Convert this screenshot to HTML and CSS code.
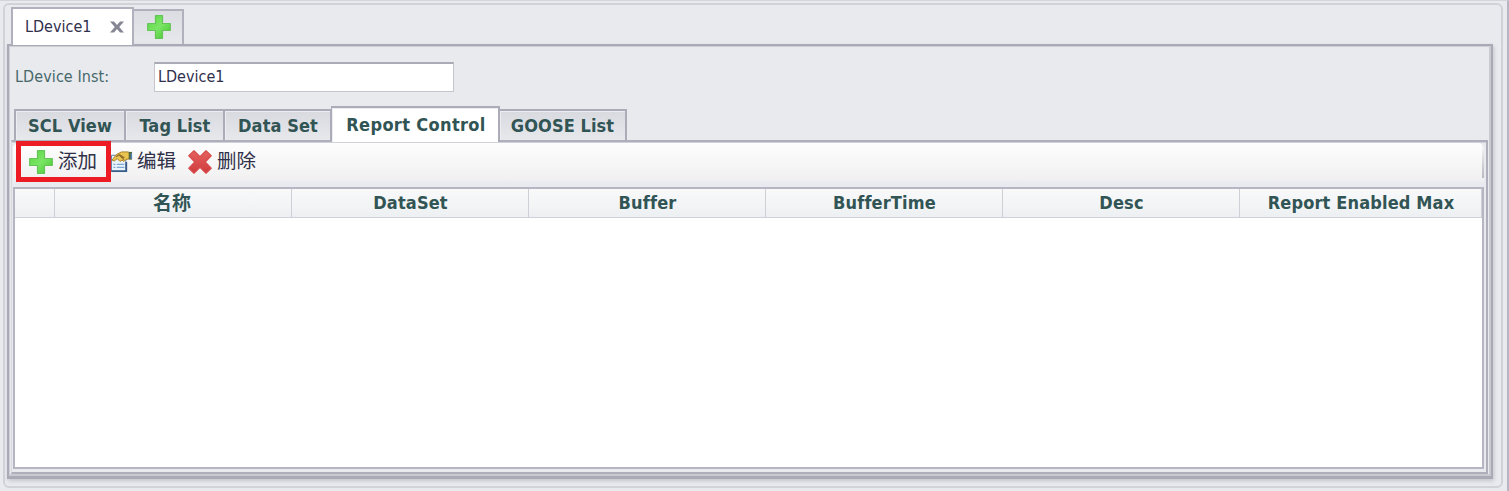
FILE: index.html
```html
<!DOCTYPE html>
<html lang="zh">
<head>
<meta charset="utf-8">
<title>LDevice1</title>
<link rel="stylesheet" href="styles.css">
</head>
<body>
<svg class="defs" width="0" height="0">
  <defs>
    <linearGradient id="green" x1="0" y1="0" x2="1" y2="1"><stop offset="0" stop-color="#5bd544"/><stop offset=".5" stop-color="#7be566"/><stop offset="1" stop-color="#43c42e"/></linearGradient>
    <linearGradient id="red" x1="0" y1="0" x2="0" y2="1"><stop offset="0" stop-color="#e4625f"/><stop offset="1" stop-color="#cf3b3c"/></linearGradient>
    <symbol id="plus" viewBox="0 0 24 24"><path d="M8.500.7h7v7.800h7.800v7h-7.800v7.800h-7v-7.800H.7v-7h7.800z" fill="url(#green)" stroke="#65c458" stroke-width="1.200" stroke-linejoin="round"/></symbol>
  </defs>
</svg>
<div class="window">
  <div class="frame">
    <div class="device-tabs">
      <div class="device-tab active"><span class="t-device">LDevice1</span>
        <svg class="close" viewBox="0 0 14 12"><path d="M0 .5h4l3 3.400 3-3.400h4L9.200 6l4.800 5.500h-4L7 8.100l-3 3.400H0L4.800 6z" fill="#858693"/></svg>
      </div>
      <div class="device-tab add"><svg class="plus" viewBox="0 0 24 24"><use href="#plus"/></svg></div>
    </div>
    <div class="device-panel">
      <div class="field"><label><span class="t-label">LDevice Inst:</span></label><div class="input"><span class="t-input">LDevice1</span></div></div>
      <div class="tabs">
        <div class="tab w1"><span>SCL View</span></div>
        <div class="tab w2"><span>Tag List</span></div>
        <div class="tab w3"><span>Data Set</span></div>
        <div class="tab w4 active"><span>Report Control</span></div>
        <div class="tab w5"><span>GOOSE List</span></div>
      </div>
      <div class="report-panel">
        <div class="toolbar">
          <div class="tool marked"><svg class="plus" viewBox="0 0 24 24"><use href="#plus"/></svg><span>添加</span></div>
          <div class="tool edit">
            <svg class="props" viewBox="0 0 23 23"><path d="M.5 5h15v17H.5z" fill="#e9f3fb" stroke="#5d7c9d"/><path d="M.5 21.500h15.500V12" fill="none" stroke="#345c87" stroke-width="1.800"/><path d="M2.500 14.500h2m1.500 0h8m-11.500 3.200h2m1.500 0h8" stroke="#7fa9d2" stroke-width="1.400"/><path d="M1 10 6 4l5-2.500h7l1.500 1v6l-4 1-2 2-2-1.500-2 1.500-3-3-3 2.500z" fill="#eac451" stroke="#a77e27"/><path d="m5.500 6.500 3-2 5 5M9 4.500l5 3" fill="none" stroke="#8f6d2c" stroke-width="1.300"/><path d="M18.500 1.500h3.500v8h-3.500z" fill="#53663c"/><path d="M20.500 3h1.500v6h-1.500z" fill="#4d83b8"/></svg>
            <span>编辑</span></div>
          <div class="tool remove">
            <svg class="cross" viewBox="0 0 24 24"><path d="M6 .8 12 6.600 18 .8l5.200 5-6 6.200 6 6.200-5.200 5-6-5.800-6 5.800-5.200-5L6.800 12l-6-6.200z" fill="url(#red)" stroke="#d84b4b" stroke-width="1.200" stroke-linejoin="round"/></svg>
            <span>删除</span></div>
          <div class="toolbar-edge"></div>
        </div>
        <div class="grid">
          <div class="head">
            <div></div><div class="cjk"><span>名称</span></div><div><span>DataSet</span></div><div><span>Buffer</span></div><div><span>BufferTime</span></div><div><span>Desc</span></div><div><span>Report Enabled Max</span></div>
          </div>
        </div>
      </div>
    </div>
  </div>
</div>
</body>
</html>
```
FILE: styles.css
```css
* { box-sizing: border-box; }
body {
  margin: 0;
  background: #e9eaee;
  font-family: "DejaVu Sans Condensed", "DejaVu Sans", "Noto Sans CJK SC", sans-serif;
  font-stretch: condensed;
  color: #315454;
  overflow: hidden;
  white-space: nowrap;
}
svg { display: block; flex: none; }
.defs { position: absolute; }
.window {
  height: 491px;
  padding: 2px 4px 3px 3px;
  border-top: 1px solid #d4d4da;
  border-right: 2px solid #b5b6c2;
}
.frame {
  height: 485px;
  display: flex;
  flex-direction: column;
  padding: 3px 8px 7px 2px;
  border: 2px solid #d1d2d8;
  border-radius: 6px;
}
.device-tabs { display: flex; align-items: flex-end; height: 36px; padding-left: 4px; }
.device-tab {
  display: flex;
  align-items: center;
  height: 35px;
  width: 50px;
  border: 2px solid #b0b1bc;
  border-left: 0;
  border-bottom: 0;
  background: linear-gradient(#dcdde2, #e7e8ec);
}
.device-tab.active {
  position: relative;
  width: 123px;
  height: 38px;
  border-left: 2px solid #b0b1bc;
  background: #fff;
  padding: 0 8px 1px 12px;
  justify-content: space-between;
  margin-bottom: -1px;
  color: #30304d;
}
.device-tab.add { justify-content: center; padding: 0 0 2px 1px; }
.t-device, .t-label, .t-input { font-size: 16px; letter-spacing: 0; }
.t-label { letter-spacing: .08px; }
.close { width: 14px; height: 12px; }
.plus { width: 24px; height: 24px; }
.device-panel {
  flex: 1;
  display: flex;
  flex-direction: column;
  border: 2px solid #a9aab6;
  border-bottom-width: 3px;
  box-shadow: inset 1px 1px #cfd0d7, inset -2px 0 #c8c9d1, inset 0 -2px #c8c9d1, 1px 2px 4px #c4c5cd;
  padding: 16px 3px 2px 2px;
}
.field { display: flex; align-items: center; height: 30px; padding-left: 4px; color: #47686b; }
.field label { width: 139px; padding-bottom: 1px; }
.input { width: 300px; height: 30px; border: 1px solid #c4c5cd; border-top: 2px solid #aaabb6; background: #fff; padding: 3px 0 0 3px; line-height: 20px; color: #30304d; }
.tabs { display: flex; align-items: flex-end; height: 48px; padding-left: 3px; }
.tab {
  height: 31px;
  display: flex;
  justify-content: center;
  align-items: center;
  border: 2px solid #abacb7;
  border-left: 0;
  border-bottom: 0;
  background: linear-gradient(#d9dae0, #e7e8ec);
  box-shadow: inset 1px 1px #ecedf0;
  font-size: 18px;
  font-weight: bold;
  letter-spacing: .1px;
}
.tab.active { position: relative; height: 36px; margin: 0 0 -2px -1px; border-left: 1px solid #abacb7; background: #fff; padding: 0 0 2px 2px; letter-spacing: .35px; }
.w1 { width: 112px; border-left: 2px solid #abacb7; }
.w2 { width: 99px; padding-left: 1px; }
.w3 { width: 107px; padding-left: 1px; }
.w4 { width: 169px; }
.w5 { width: 127px; }
.report-panel {
  flex: 1;
  display: flex;
  flex-direction: column;
  border: 2px solid #aeafba;
  border-left-color: #d8d9df;
  border-left-width: 1px;
  border-bottom-width: 2px;
  box-shadow: inset 0 1px #d1d2d9;
  padding: 1px 2px 3px 1px;
}
.toolbar {
  height: 44px;
  display: flex;
  align-items: flex-start;
  background: linear-gradient(#fdfdfd, #f1f1f2 82%, #e9eaef 92%);
  color: #303048;
  font-family: "Noto Sans CJK SC", sans-serif;
  font-size: 19.5px;
  line-height: 28px;
  border-radius: 6px 6px 0 0;
}
.toolbar-edge { width: 2px; height: 35px; margin-left: auto; background: linear-gradient(transparent, #b8b9c2); }
.tool { display: flex; align-items: center; }
.tool span { margin-top: -3px; }
.marked { width: 95px; height: 41px; margin: -2px 0 0 3px; border: 5px solid #ed1c24; padding-left: 8px; gap: 5px; position: relative; }
.edit { height: 37px; gap: 4px; }
.props { width: 22px; height: 23px; }
.remove { height: 37px; margin-left: 12px; gap: 5px; }
.cross { width: 24px; height: 24px; }
.grid { flex: 1; border: 2px solid #b5b6c1; background: #fff; }
.head { display: grid; grid-template-columns: 40px 237px 237px 237px 237px 237px 1fr; height: 29px; }
.head > div { border-right: 1px solid #cfd0d7; border-bottom: 1px solid #cfd0d7; background: linear-gradient(#f9f9fa, #edf0f2); display: flex; justify-content: center; align-items: center; font-size: 18px; font-weight: bold; letter-spacing: .15px; padding: 0 0 2px 1px; }
.head .cjk { font-family: "Noto Sans CJK SC", sans-serif; font-size: 19px; line-height: 24px; padding-right: 3px; letter-spacing: 0; }
```
